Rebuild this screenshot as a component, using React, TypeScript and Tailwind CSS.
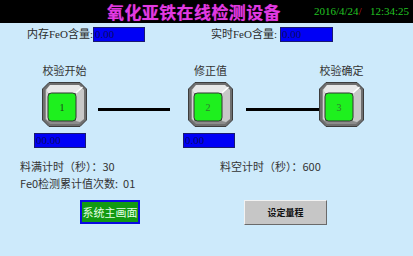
import React from 'react';

const serif = { fontFamily: '"Liberation Serif", "Noto Sans CJK SC", serif' };
const sans = { fontFamily: '"Noto Sans CJK SC", "Liberation Sans", sans-serif' };

function BevelButton({ n, dark }: { n: string; dark?: boolean }) {
  return (
    <div className="relative w-[45px] h-[45px]">
      <svg width="45" height="45" viewBox="0 0 45 45" className="block">
        <polygon points="7,0.5 38,0.5 44.5,7 44.5,38 38,44.5 7,44.5 0.5,38 0.5,7" fill="#6f6f6f" stroke="#3c3c3c" />
        <polygon points="8,3 37,3 42,8 42,37 37,42 8,42 3,37 3,8" fill="#8c8c8c" />
        <polygon points="8,3 37,3 40.5,6.5 34,11 6,11 4,8" fill="#e8e8e8" />
        <polygon points="4,8 6,11 6,39 4,37" fill="#d4d4d4" />
        <polygon points="40.5,6.5 42,8 42,37 38,40 34,39 34,11" fill="#c8c8c8" />
        <line x1="34" y1="11" x2="40.5" y2="5" stroke="#ffffff" strokeWidth="1.5" />
        <rect x="6" y="11" width="28" height="28" rx="3.5" fill="#1ef01e" stroke="#333333" />
      </svg>
      <span
        className={`absolute left-[6px] top-[11px] w-[28px] h-[28px] flex items-center justify-center text-[10px] ${dark ? 'text-[#1c3a1c]' : 'text-[#2f7a2f]'}`}
        style={serif}
      >
        {n}
      </span>
    </div>
  );
}

function ValueBox({ v, w = 'w-[52px]' }: { v: string; w?: string }) {
  return (
    <div className={`${w} h-[15px] bg-[#0000f6] border border-[#1a1a70] pl-[1px] text-[11px] leading-[13px] text-[#0a0a66]`} style={serif}>
      {v}
    </div>
  );
}

export default function App() {
  return (
    <div className="w-[413px] h-[256px] bg-[#cdeafb] flex flex-col overflow-hidden text-[#2a2a2a]">
      {/* header */}
      <div className="h-[23px] bg-black flex items-center shrink-0">
        <span
          className="ml-[107px] text-[17px] leading-[20px] font-bold tracking-[0.4px] text-[#e23ae2]"
          style={{ fontFamily: '"Noto Sans CJK SC", serif', textShadow: '0 0 1px #701070' }}
        >
          氧化亚铁在线检测设备
        </span>
        <span className="ml-auto mr-[4px] text-[11px] text-[#22c422] whitespace-pre" style={serif}>
          2016/4/24<span className="text-[#c01818]">/</span>{'   '}12:34:25
        </span>
      </div>

      {/* row 1 */}
      <div className="mt-[4px] h-[15px] flex items-center text-[11px]" style={serif}>
        <div className="w-[211px] pl-[27px] flex items-center">
          <span>内存FeO含量:</span>
          <ValueBox v="0.00" />
        </div>
        <div className="flex items-center">
          <span>实时FeO含量:</span>
          <span className="w-[3px]" />
          <ValueBox v="0.00" w="w-[53px]" />
        </div>
      </div>

      {/* process steps */}
      <div className="mt-[21px] pl-[34px] flex items-start text-[11px] text-[#333]" style={sans}>
        <div className="w-[53px] flex flex-col">
          <div className="ml-[8px] w-[45px] h-[14px] leading-[14px] text-center whitespace-nowrap">校验开始</div>
          <div className="ml-[8px] mt-[5px]">
            <BevelButton n="1" dark />
          </div>
          <div className="mt-[6px]">
            <ValueBox v="00.00" />
          </div>
        </div>
        <div className="ml-[11px] mt-[45px] w-[72px] h-[3px] bg-black" />
        <div className="ml-[13px] w-[52px] flex flex-col">
          <div className="ml-[5px] w-[45px] h-[14px] leading-[14px] text-center whitespace-nowrap">修正值</div>
          <div className="ml-[5px] mt-[5px]">
            <BevelButton n="2" />
          </div>
          <div className="mt-[6px]">
            <ValueBox v="0.00" />
          </div>
        </div>
        <div className="ml-[11px] mt-[45px] w-[73px] h-[3px] bg-black" />
        <div className="w-[45px] flex flex-col">
          <div className="w-[45px] h-[14px] leading-[14px] text-center whitespace-nowrap">校验确定</div>
          <div className="mt-[5px]">
            <BevelButton n="3" />
          </div>
        </div>
      </div>

      {/* counters */}
      <div className="mt-[10px] pl-[20px] text-[11px] leading-[17px] text-[#333]" style={sans}>
        <div className="flex">
          <span className="w-[200px]">料满计时（秒）：30</span>
          <span>料空计时（秒）：600</span>
        </div>
        <div>Fe0检测累计值次数:&nbsp;&nbsp;01</div>
      </div>

      {/* bottom buttons */}
      <div className="mt-[8px] pl-[80px] flex items-start">
        <div
          className="w-[60px] h-[24px] border-2 border-[#0a0ae0] bg-[#129a12] flex items-center justify-center text-[11px] text-[#e4ffe4]"
          style={sans}
        >
          系统主画面
        </div>
        <div
          className="ml-[104px] w-[83px] h-[25px] bg-[#c6c6c6] border border-t-[#f2f2f2] border-l-[#f2f2f2] border-r-[#6a6a6a] border-b-[#6a6a6a] flex items-center justify-center text-[9px] font-bold text-[#111]"
          style={sans}
        >
          设定量程
        </div>
      </div>
    </div>
  );
}
